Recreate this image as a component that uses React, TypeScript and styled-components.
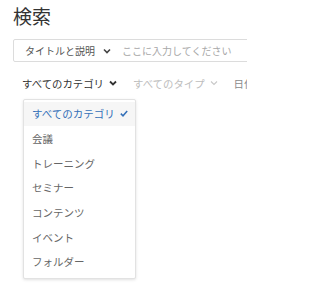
import React from 'react'
import styled, { createGlobalStyle } from 'styled-components'

const GlobalStyle = createGlobalStyle`
  body {
    margin: 0;
    padding: 0;
    background: #fff;
    font-family: "Noto Sans CJK JP", "Noto Sans", sans-serif;
    color: #333;
  }
`

const categories = ['すべてのカテゴリ', '会議', 'トレーニング', 'セミナー', 'コンテンツ', 'イベント', 'フォルダー']

const Chevron: React.FC<{ color: string; weight?: number }> = ({ color, weight = 1.6 }) => (
  <ChevronSvg width="8" height="6" viewBox="0 0 8 6">
    <polyline points="1,1.5 4,4.5 7,1.5" fill="none" stroke={color} strokeWidth={weight} />
  </ChevronSvg>
)

export default function App() {
  return (
    <Page>
      <GlobalStyle />
      <Title>検索</Title>
      <SearchBox>
        <FieldSelect>
          タイトルと説明
          <Chevron color="#444" />
        </FieldSelect>
        <Placeholder>ここに入力してください</Placeholder>
      </SearchBox>
      <FilterBar>
        <FilterWrap>
          <Filter $active>
            すべてのカテゴリ
            <Chevron color="#333" weight={1.8} />
          </Filter>
          <Menu>
            {categories.map((c, i) => (
              <MenuItem key={c} $selected={i === 0}>
                {c}
                {i === 0 && (
                  <svg width="8" height="7" viewBox="0 0 8 7">
                    <polyline points="0.8,3.6 3,5.8 7.2,1" fill="none" stroke="#3470b8" strokeWidth="1.5" />
                  </svg>
                )}
              </MenuItem>
            ))}
          </Menu>
        </FilterWrap>
        <Filter>
          すべてのタイプ
          <Chevron color="#c8c8c8" weight={1.1} />
        </Filter>
        <Filter $muted>日付</Filter>
      </FilterBar>
    </Page>
  )
}

const Page = styled.div`
  width: 247px;
  height: 287px;
  box-sizing: border-box;
  padding-left: 13px;
  padding-top: 3px;
  overflow: hidden;
`
const Title = styled.h1`
  margin: 0;
  font-size: 19px;
  line-height: 26px;
  font-weight: 400;
  color: #333;
`
const SearchBox = styled.div`
  margin-top: 10px;
  width: 260px;
  height: 23px;
  box-sizing: border-box;
  border: 1px solid #dcdcdc;
  border-radius: 2px;
  display: flex;
  align-items: center;
  padding-left: 11px;
  font-size: 10px;
  white-space: nowrap;
`
const FieldSelect = styled.span`
  display: flex;
  align-items: center;
  gap: 8px;
  color: #555;
`
const Placeholder = styled.span`
  margin-left: 11px;
  color: #a8a8a8;
`
const ChevronSvg = styled.svg`
  flex-shrink: 0;
`
const FilterBar = styled.div`
  margin-top: 11px;
  height: 20px;
  padding-left: 9px;
  display: flex;
  align-items: center;
  gap: 16px;
  font-size: 10.4px;
  white-space: nowrap;
`
const FilterWrap = styled.div`
  position: relative;
`
const Filter = styled.span<{ $active?: boolean; $muted?: boolean }>`
  display: flex;
  align-items: center;
  gap: 5px;
  color: ${(p) => (p.$active ? '#333' : p.$muted ? '#8a8a8a' : '#bdbdbd')};
`
const Menu = styled.ul`
  position: absolute;
  left: 1px;
  top: calc(100% + 8px);
  width: 113px;
  box-sizing: border-box;
  margin: 0;
  padding: 2px 0 4px;
  list-style: none;
  background: #fff;
  border: 1px solid #e2e2e2;
  border-radius: 2px;
  box-shadow: 0 1px 3px rgba(0, 0, 0, 0.12);
  z-index: 5;
`
const MenuItem = styled.li<{ $selected?: boolean }>`
  height: 24.7px;
  display: flex;
  align-items: center;
  justify-content: space-between;
  padding: 0 7px 0 8px;
  font-size: 10.5px;
  color: ${(p) => (p.$selected ? '#3470b8' : '#666')};
  background: ${(p) => (p.$selected ? '#f6f6f6' : 'transparent')};
`
